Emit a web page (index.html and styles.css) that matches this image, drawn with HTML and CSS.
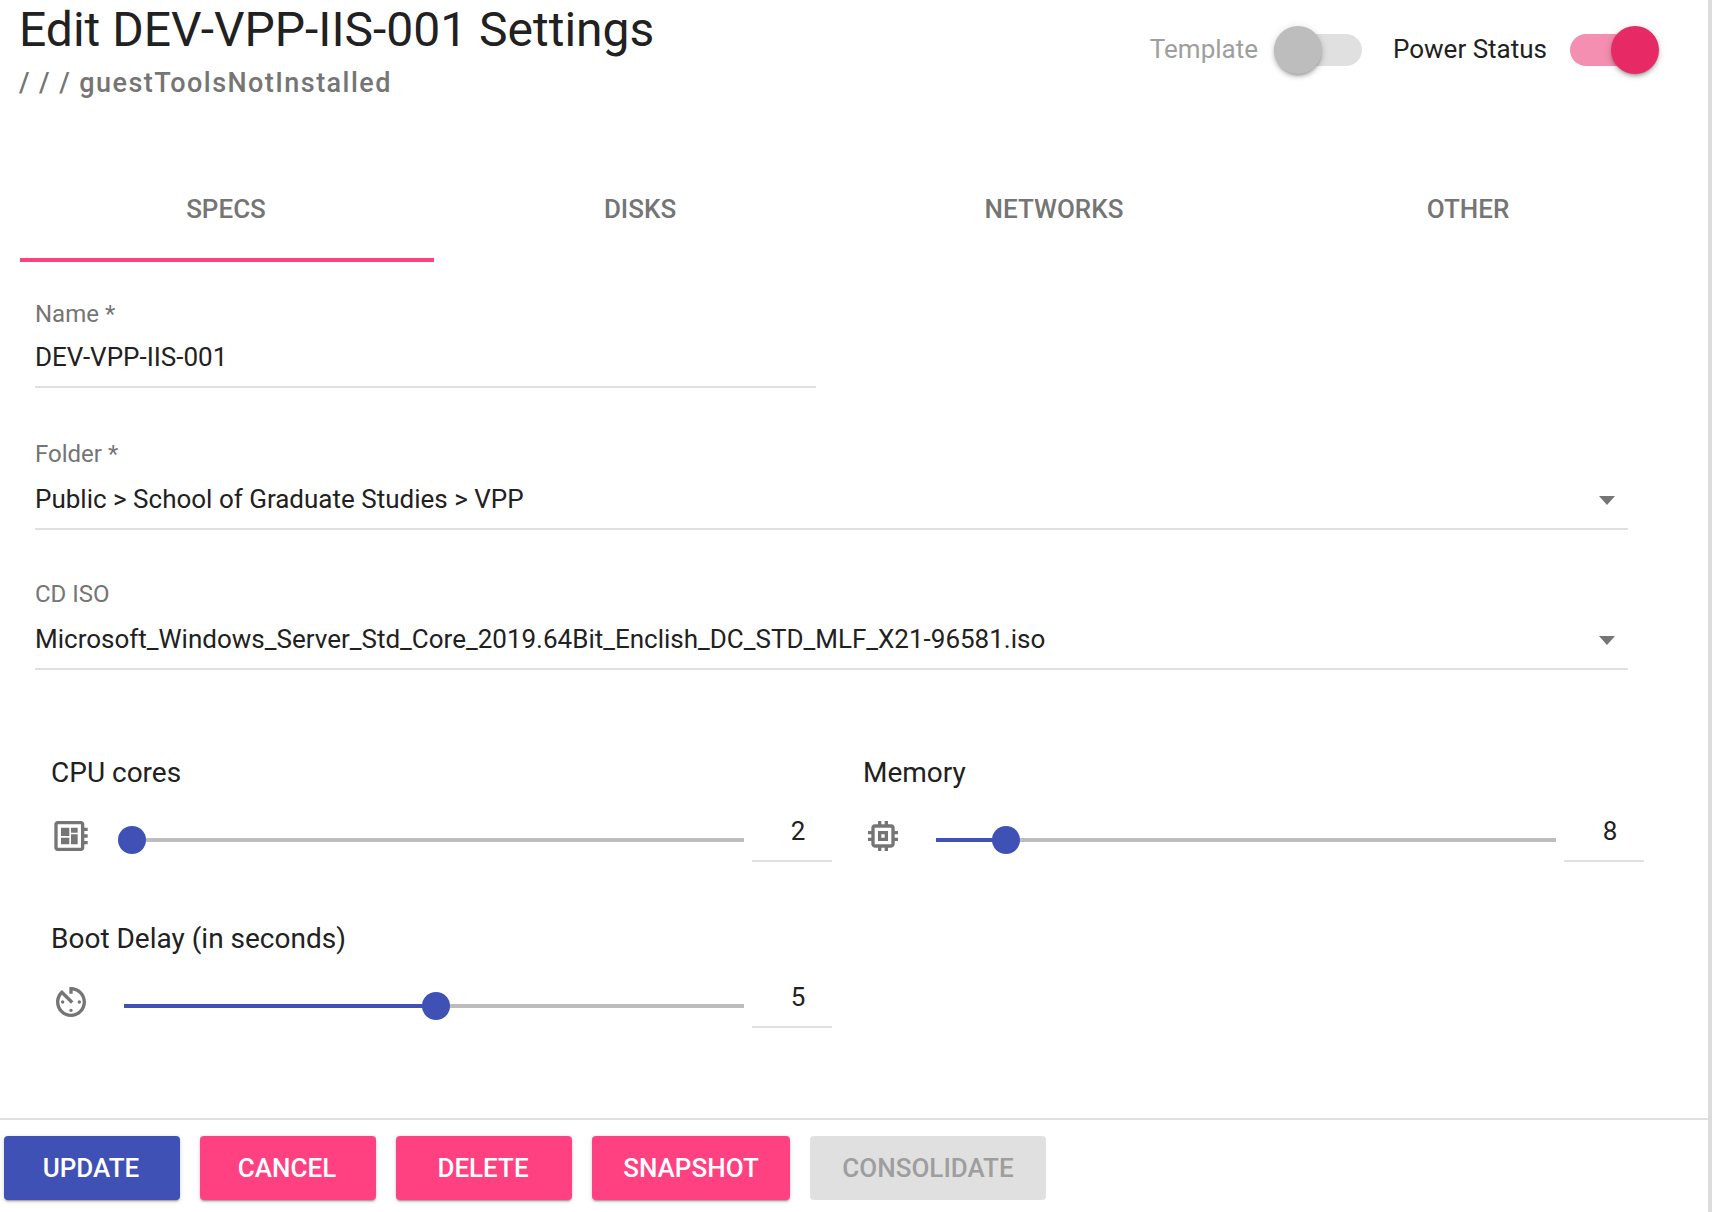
FILE: index.html
```html
<!DOCTYPE html>
<html lang="en">
<head>
<meta charset="utf-8">
<title>Edit VM Settings</title>
<link rel="stylesheet" href="styles.css">
</head>
<body>
<div class="dialog">
  <header class="head">
    <div class="titles">
      <h1 class="title">Edit DEV-VPP-IIS-001 Settings</h1>
      <div class="crumbs">/ / / guestToolsNotInstalled</div>
    </div>
    <div class="switches">
      <div class="switch off">
        <span class="switch-label">Template</span>
        <span class="toggle"><span class="knob"></span></span>
      </div>
      <div class="switch on">
        <span class="switch-label">Power Status</span>
        <span class="toggle"><span class="knob"></span></span>
      </div>
    </div>
  </header>

  <nav class="tabs">
    <div class="tab active">SPECS</div>
    <div class="tab">DISKS</div>
    <div class="tab">NETWORKS</div>
    <div class="tab">OTHER</div>
  </nav>

  <section class="form">
    <div class="field short">
      <div class="field-label">Name *</div>
      <div class="field-value">DEV-VPP-IIS-001</div>
    </div>
    <div class="field">
      <div class="field-label">Folder *</div>
      <div class="field-value">Public &gt; School of Graduate Studies &gt; VPP<span class="caret"></span></div>
    </div>
    <div class="field">
      <div class="field-label">CD ISO</div>
      <div class="field-value">Microsoft_Windows_Server_Std_Core_2019.64Bit_Enclish_DC_STD_MLF_X21-96581.iso<span class="caret"></span></div>
    </div>
  </section>

  <section class="sliders">
    <div class="slider-block">
      <div class="slider-title">CPU cores</div>
      <div class="slider-row">
        <svg class="icon" viewBox="0 0 24 24"><path d="M22 9V7h-2V5c0-1.1-.9-2-2-2H4c-1.1 0-2 .9-2 2v14c0 1.1.9 2 2 2h14c1.1 0 2-.9 2-2v-2h2v-2h-2v-2h2v-2h-2V9h2zm-4 10H4V5h14v14zM6 13h5v4H6zm6-6h4v3h-4zM6 7h5v5H6zm6 4h4v6h-4z"/></svg>
        <div class="slider"><div class="track"><div class="fill" style="width:0"></div><div class="thumb" style="left:8px"></div></div></div>
        <div class="num">2</div>
      </div>
    </div>
    <div class="slider-block">
      <div class="slider-title">Memory</div>
      <div class="slider-row">
        <svg class="icon" viewBox="0 0 24 24"><path d="M15 9H9v6h6V9zm-2 4h-2v-2h2v2zm8-2V9h-2V7c0-1.1-.9-2-2-2h-2V3h-2v2h-2V3H9v2H7c-1.1 0-2 .9-2 2v2H3v2h2v2H3v2h2v2c0 1.1.9 2 2 2h2v2h2v-2h2v2h2v-2h2c1.1 0 2-.9 2-2v-2h2v-2h-2v-2h2zm-4 6H7V7h10v10z"/></svg>
        <div class="slider"><div class="track"><div class="fill" style="width:70px"></div><div class="thumb" style="left:70px"></div></div></div>
        <div class="num">8</div>
      </div>
    </div>
    <div class="slider-block">
      <div class="slider-title">Boot Delay (in seconds)</div>
      <div class="slider-row">
        <svg class="icon" viewBox="0 0 24 24"><path d="M11 17c0 .55.45 1 1 1s1-.45 1-1-.45-1-1-1-1 .45-1 1zm0-14v4h2V5.08c3.39.49 6 3.39 6 6.92 0 3.87-3.13 7-7 7s-7-3.13-7-7c0-1.68.59-3.22 1.58-4.42L12 13l1.41-1.41-6.8-6.8v.02C4.42 6.45 3 9.05 3 12c0 4.97 4.02 9 8.99 9C16.97 21 21 16.97 21 12s-4.03-9-9.01-9H11zm7 9c0-.55-.45-1-1-1s-1 .45-1 1 .45 1 1 1 1-.45 1-1zM6 12c0 .55.45 1 1 1s1-.45 1-1-.45-1-1-1-1 .45-1 1z"/></svg>
        <div class="slider"><div class="track"><div class="fill" style="width:312px"></div><div class="thumb" style="left:312px"></div></div></div>
        <div class="num">5</div>
      </div>
    </div>
  </section>

  <footer class="actions">
    <button class="btn primary">UPDATE</button>
    <button class="btn accent">CANCEL</button>
    <button class="btn accent">DELETE</button>
    <button class="btn accent wide">SNAPSHOT</button>
    <button class="btn disabled">CONSOLIDATE</button>
  </footer>
</div>
</body>
</html>
```
FILE: styles.css
```css
* { box-sizing: border-box; }
html, body { margin: 0; padding: 0; background: #fff; }
body { font-family: Roboto, sans-serif; color: #212121; height: 1212px; overflow: hidden; }
.dialog { width: 1712px; height: 1212px; border-right: 4px solid #dcdcdc; display: flex; flex-direction: column; }

.head { flex: none; display: flex; justify-content: space-between; height: 132px; padding-left: 19px; }
.title { margin: 0; font-size: 48px; font-weight: 400; line-height: 60px; color: #212121; }
.crumbs { margin-top: 8px; font-size: 27px; font-weight: 500; line-height: 30px; letter-spacing: 1.44px; color: #757575; }
.switches { display: flex; gap: 31px; padding: 26px 49px 0 0; height: 74px; }
.switch { display: flex; align-items: center; gap: 16px; font-size: 26px; height: 48px; }
.switch.on { gap: 23px; }
.switch-label { margin-top: -2px; }
.switch.off .switch-label { color: #9e9e9e; }
.toggle { position: relative; display: block; width: 88px; height: 32px; border-radius: 16px; }
.off .toggle { background: #e0e0e0; }
.on .toggle { background: #f48fb1; width: 82px; margin-right: 7px; }
.knob { position: absolute; top: -8px; width: 48px; height: 48px; border-radius: 50%; box-shadow: 0 3px 3px -2px rgba(0,0,0,.25), 0 3px 4px rgba(0,0,0,.16), 0 1px 8px rgba(0,0,0,.12); }
.off .knob { left: 0; background: #bdbdbd; }
.on .knob { right: -7px; background: #e72a65; }

.tabs { flex: none; display: flex; margin-left: 20px; width: 1656px; height: 130px; }
.tab { flex: 1; height: 130px; padding: 59px 2px 0 0; text-align: center; font-size: 26px; font-weight: 500; line-height: 36px; color: #757575; border-bottom: 4px solid transparent; }
.tab.active { border-bottom-color: #ff4081; }

.form { flex: none; padding: 32px 0 0 35px; width: 1628px; }
.field { height: 140px; }
.field.short { width: 781px; height: 142px; }
.field-label { font-size: 24px; line-height: 36px; color: #757575; }
.short .field-label { padding-top: 2px; }
.field-value { position: relative; height: 58px; padding-top: 9px; font-size: 26px; line-height: 36px; color: #212121; border-bottom: 2px solid #e0e0e0; }
.short .field-value { height: 56px; padding-top: 7px; }
.caret { position: absolute; right: 13px; top: 24px; width: 0; height: 0; border-left: 8px solid transparent; border-right: 8px solid transparent; border-top: 9px solid #757575; }

.sliders { display: grid; grid-template-columns: 812px 813px; grid-auto-rows: 166px; padding: 36px 0 0 51px; flex: 1; min-height: 0; }
.slider-title { padding-top: 1px; font-size: 28px; line-height: 40px; color: #212121; }
.slider-row { display: flex; align-items: flex-start; margin-top: 23px; }
.icon { width: 40px; height: 40px; fill: #757575; flex: none; }
.slider { width: 620px; margin-left: 33px; padding-top: 22px; }
.track { position: relative; height: 4px; background: #bdbdbd; }
.fill { height: 4px; background: #3f51b5; }
.thumb { position: absolute; top: -12px; width: 28px; height: 28px; margin-left: -14px; border-radius: 50%; background: #3f51b5; }
.num { width: 80px; height: 49px; margin: -3px 0 0 8px; padding-left: 12px; text-align: center; font-size: 26px; line-height: 36px; color: #212121; border-bottom: 2px solid #e0e0e0; }

.actions { flex: none; display: flex; gap: 20px; height: 94px; padding: 16px 0 0 4px; border-top: 2px solid #e0e0e0; }
.btn { height: 64px; padding: 0 2px 0 0; border: 0; border-radius: 4px; font-family: Roboto, sans-serif; font-size: 26px; font-weight: 500; color: #fff; box-shadow: 0 3px 1px -2px rgba(0,0,0,.2), 0 2px 2px rgba(0,0,0,.14), 0 1px 5px rgba(0,0,0,.12); }
.primary { background: #3f51b5; width: 176px; }
.accent { background: #ff4081; width: 176px; }
.accent.wide { width: 198px; padding: 0; }
.disabled { background: #e0e0e0; color: #9e9e9e; width: 236px; padding: 0; box-shadow: none; }
```
